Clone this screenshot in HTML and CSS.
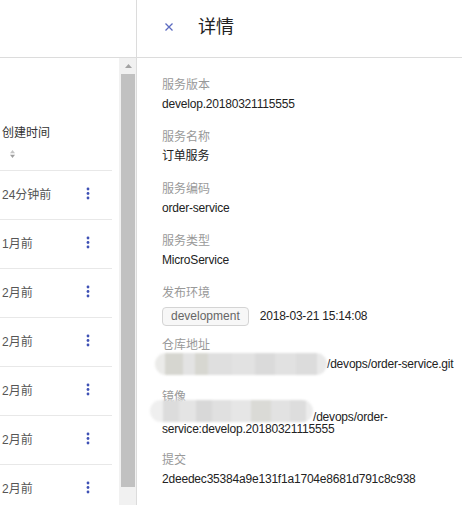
FILE: index.html
```html
<!DOCTYPE html>
<html lang="zh-CN">
<head>
<meta charset="utf-8">
<title>详情</title>
<link rel="stylesheet" href="styles.css">
</head>
<body>
<div class="app">
  <aside class="left">
    <div class="left-head"></div>
    <div class="left-body">
      <div class="table">
        <div class="th">
          <div class="th-title">创建时间</div>
          <svg class="sort" width="7" height="10" viewBox="0 0 7 10"><polygon points="1,4.2 3.5,1 6,4.2" fill="#c4c4c4"/><polygon points="1,5.8 3.5,9 6,5.8" fill="#9e9e9e"/></svg>
        </div>
        <div class="row"><span class="cell">24分钟前</span><svg class="kebab" width="4" height="14" viewBox="0 0 4 14"><circle cx="2" cy="2" r="1.4"/><circle cx="2" cy="6.5" r="1.4"/><circle cx="2" cy="11" r="1.4"/></svg></div>
        <div class="row"><span class="cell">1月前</span><svg class="kebab" width="4" height="14" viewBox="0 0 4 14"><circle cx="2" cy="2" r="1.4"/><circle cx="2" cy="6.5" r="1.4"/><circle cx="2" cy="11" r="1.4"/></svg></div>
        <div class="row"><span class="cell">2月前</span><svg class="kebab" width="4" height="14" viewBox="0 0 4 14"><circle cx="2" cy="2" r="1.4"/><circle cx="2" cy="6.5" r="1.4"/><circle cx="2" cy="11" r="1.4"/></svg></div>
        <div class="row"><span class="cell">2月前</span><svg class="kebab" width="4" height="14" viewBox="0 0 4 14"><circle cx="2" cy="2" r="1.4"/><circle cx="2" cy="6.5" r="1.4"/><circle cx="2" cy="11" r="1.4"/></svg></div>
        <div class="row"><span class="cell">2月前</span><svg class="kebab" width="4" height="14" viewBox="0 0 4 14"><circle cx="2" cy="2" r="1.4"/><circle cx="2" cy="6.5" r="1.4"/><circle cx="2" cy="11" r="1.4"/></svg></div>
        <div class="row"><span class="cell">2月前</span><svg class="kebab" width="4" height="14" viewBox="0 0 4 14"><circle cx="2" cy="2" r="1.4"/><circle cx="2" cy="6.5" r="1.4"/><circle cx="2" cy="11" r="1.4"/></svg></div>
        <div class="row"><span class="cell">2月前</span><svg class="kebab" width="4" height="14" viewBox="0 0 4 14"><circle cx="2" cy="2" r="1.4"/><circle cx="2" cy="6.5" r="1.4"/><circle cx="2" cy="11" r="1.4"/></svg></div>
      </div>
      <div class="scrollbar">
        <div class="scroll-btn"><svg width="7" height="4" viewBox="0 0 7 4"><polygon points="0,4 3.5,0 7,4" fill="#a3a3a3"/></svg></div>
        <div class="thumb"></div>
      </div>
    </div>
  </aside>
  <main class="right">
    <header class="right-head">
      <svg class="close" width="8" height="8" viewBox="0 0 8 8"><path d="M0.5 0.5 L7.5 7.5 M7.5 0.5 L0.5 7.5" stroke="#5c6bc0" stroke-width="1.3" fill="none"/></svg>
      <h1 class="title">详情</h1>
    </header>
    <div class="content">
      <div class="item">
        <div class="label">服务版本</div>
        <div class="value">develop.20180321115555</div>
      </div>
      <div class="item">
        <div class="label">服务名称</div>
        <div class="value">订单服务</div>
      </div>
      <div class="item">
        <div class="label">服务编码</div>
        <div class="value">order-service</div>
      </div>
      <div class="item">
        <div class="label">服务类型</div>
        <div class="value">MicroService</div>
      </div>
      <div class="item item-tag">
        <div class="label">发布环境</div>
        <div class="value tag-row"><span class="tag">development</span><span class="date">2018-03-21 15:14:08</span></div>
      </div>
      <div class="item">
        <div class="label">仓库地址</div>
        <div class="value masked nowrap"><span class="mask-gap gap-repo"></span>/devops/order-service.git<span class="blur blur-repo"></span></div>
      </div>
      <div class="item item-image">
        <div class="label">镜像</div>
        <div class="value masked image-value"><span class="mask-gap gap-image"></span>/devops/order-service:develop.20180321115555<span class="blur blur-image"></span></div>
      </div>
      <div class="item">
        <div class="label">提交</div>
        <div class="value">2deedec35384a9e131f1a1704e8681d791c8c938</div>
      </div>
    </div>
  </main>
</div>
</body>
</html>
```

FILE: styles.css
```css
* { box-sizing: border-box; }
html, body { margin: 0; padding: 0; background: #fff; }
body {
  font-family: "Liberation Sans", "Noto Sans CJK SC", sans-serif;
  font-size: 12px;
  color: #222;
}
.app {
  display: flex;
  width: 462px;
  height: 505px;
  overflow: hidden;
}

/* left panel */
.left {
  width: 137px;
  flex: none;
  border-right: 1px solid #dcdcdc;
  display: flex;
  flex-direction: column;
}
.left-head {
  height: 58px;
  flex: none;
  border-bottom: 1px solid #dcdcdc;
}
.left-body {
  flex: 1;
  display: flex;
  min-height: 0;
}
.table {
  width: 119px;
  flex: none;
  padding-right: 7px;
}
.th {
  height: 113px;
  border-bottom: 1px solid #e8e8e8;
  padding: 66px 0 0 2px;
}
.th-title {
  line-height: 18px;
  color: #333;
}
.sort {
  display: block;
  margin: 7px 0 0 6.5px;
}
.row {
  height: 49px;
  border-bottom: 1px solid #e8e8e8;
  display: flex;
  align-items: center;
  padding-left: 2px;
}
.cell {
  width: 84px;
  color: #555;
  line-height: 18px;
}
.kebab {
  fill: #3f51b5;
  margin-top: -2px;
}
.scrollbar {
  width: 17px;
  flex: none;
  background: #f1f1f1;
  display: flex;
  flex-direction: column;
}
.scroll-btn {
  height: 16px;
  display: flex;
  align-items: center;
  justify-content: center;
  padding-left: 1px;
}
.scroll-btn svg { display: block; margin-top: -1px; }
.thumb {
  height: 413px;
  margin: 0 1px 0 2px;
  background: #c1c1c1;
}

/* right panel */
.right {
  flex: 1;
  min-width: 0;
  display: flex;
  flex-direction: column;
}
.right-head {
  height: 58px;
  flex: none;
  border-bottom: 1px solid #dcdcdc;
  display: flex;
  align-items: center;
  padding: 0 0 3px 28px;
}
.close { display: block; flex: none; }
.title {
  margin: 0 0 0 25px;
  font-size: 18px;
  font-weight: normal;
  line-height: 24px;
  color: #222;
}
.content {
  padding: 17.5px 2px 0 25px;
}
.item { margin-bottom: 14px; }
.label {
  line-height: 19px;
  color: #999;
}
.value {
  line-height: 19px;
  color: #222;
  letter-spacing: -0.2px;
}
.nowrap { white-space: nowrap; }
.item-tag { margin-bottom: 10px; }
.tag-row {
  display: flex;
  align-items: center;
  margin-top: 4px;
  line-height: 17px;
}
.tag {
  display: inline-block;
  height: 19px;
  padding: 0 8px;
  border: 1px solid #d4d4d4;
  border-radius: 4px;
  background: #f7f7f7;
  color: #666;
  line-height: 17px;
  letter-spacing: 0;
}
.date { margin-left: 11px; }
.masked { position: relative; }
.mask-gap { display: inline-block; height: 1px; }
.gap-repo { width: 165px; }
.gap-image { width: 151px; }
.item-image { margin-bottom: 16px; }
.image-value {
  margin-top: 4.5px;
  line-height: 12px;
}
.blur {
  position: absolute;
  height: 22px;
  border-radius: 11px;
  filter: blur(1.2px);
}
.blur-repo {
  left: -7px;
  top: -1.5px;
  width: 172px;
  background: linear-gradient(90deg,
    #ebebe9 0 6%, #d6d6d0 6% 16%, #e3e3e3 16% 23%, #d7d7d1 23% 31%,
    #dfdfdf 31% 45%, #e2e2e2 45% 58%, #dadada 58% 70%, #e1e1e1 70% 82%,
    #dcdcdc 82% 94%, #e9e9e9 94% 100%);
}
.blur-image {
  left: -12px;
  top: -11px;
  width: 163px;
  background: linear-gradient(90deg,
    #efefef 0 8%, #dcdcdc 8% 18%, #e4e4e4 18% 28%, #d8d8d8 28% 38%,
    #e0e0e0 38% 50%, #e6e6e6 50% 62%, #dadad6 62% 74%, #e2e2e2 74% 86%,
    #dddddd 86% 96%, #ececec 96% 100%);
}
```
